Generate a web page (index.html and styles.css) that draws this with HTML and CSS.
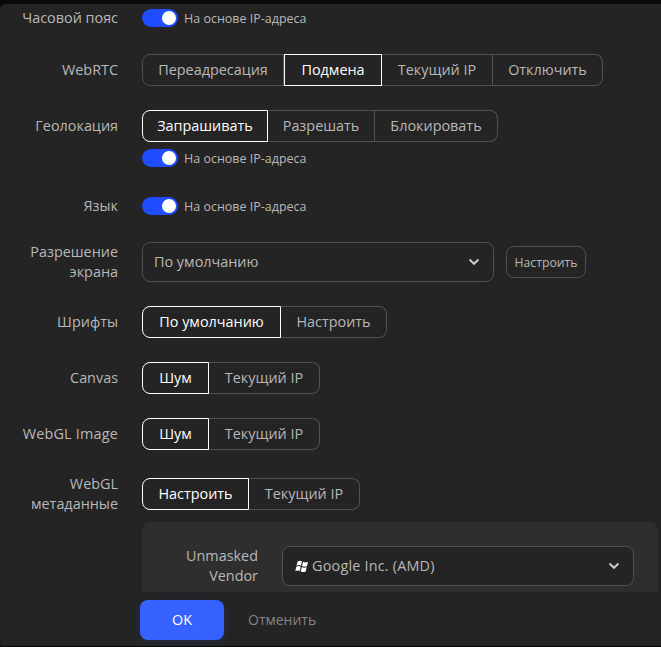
FILE: index.html
```html
<!DOCTYPE html>
<html lang="ru">
<head>
  <meta charset="UTF-8" />
  <meta name="viewport" content="width=device-width, initial-scale=1.0" />
  <title>Настройки профиля</title>
  <link rel="stylesheet" href="styles.css">
</head>
<body>
  <div class="modal">
    <div class="form">
      <div class="row">
        <div class="label">Часовой пояс</div>
        <div class="switch-line"><span class="switch"></span><span class="hint">На основе IP-адреса</span></div>
      </div>

      <div class="row">
        <div class="label">WebRTC</div>
        <div class="group">
          <button class="w142">Переадресация</button>
          <button class="w98 active">Подмена</button>
          <button class="w111">Текущий IP</button>
          <button class="w110">Отключить</button>
        </div>
      </div>

      <div class="row row-top">
        <div class="label label-32">Геолокация</div>
        <div>
          <div class="group">
            <button class="w126 active">Запрашивать</button>
            <button class="w107">Разрешать</button>
            <button class="w123">Блокировать</button>
          </div>
          <div class="switch-line below"><span class="switch"></span><span class="hint">На основе IP-адреса</span></div>
        </div>
      </div>

      <div class="row">
        <div class="label">Язык</div>
        <div class="switch-line"><span class="switch"></span><span class="hint">На основе IP-адреса</span></div>
      </div>

      <div class="row">
        <div class="label">Разрешение<br>экрана</div>
        <div class="line">
          <div class="select">
            <span>По умолчанию</span>
            <svg class="arrow" viewBox="0 0 12 8"><path d="M1.5 1.5 L6 5.8 L10.5 1.5" /></svg>
          </div>
          <button class="small">Настроить</button>
        </div>
      </div>

      <div class="row">
        <div class="label">Шрифты</div>
        <div class="group">
          <button class="w139 active">По умолчанию</button>
          <button class="w106">Настроить</button>
        </div>
      </div>

      <div class="row">
        <div class="label">Canvas</div>
        <div class="group">
          <button class="w67 active">Шум</button>
          <button class="w111">Текущий IP</button>
        </div>
      </div>

      <div class="row">
        <div class="label latin">WebGL Image</div>
        <div class="group">
          <button class="w67 active">Шум</button>
          <button class="w111">Текущий IP</button>
        </div>
      </div>

      <div class="row">
        <div class="label">WebGL<br>метаданные</div>
        <div class="group">
          <button class="w107 active">Настроить</button>
          <button class="w111">Текущий IP</button>
        </div>
      </div>

      <div class="sub">
        <div class="row">
          <div class="label">Unmasked<br>Vendor</div>
          <div class="select">
            <svg class="win" viewBox="0 0 14 13">
              <path d="M2.6 1.4 Q4.8 0 7 1.3 L6 5.7 Q3.8 4.5 1.5 5.8 Z" />
              <path d="M8 1.8 Q10.5 3 13 1.7 L12 6.1 Q9.6 7.3 7 6.1 Z" />
              <path d="M1.3 6.8 Q3.5 5.5 5.7 6.7 L4.7 11 Q2.5 9.8 0.3 11.1 Z" />
              <path d="M6.8 7.1 Q9.2 8.4 11.7 7.1 L10.7 11.5 Q8.2 12.7 5.7 11.5 Z" />
            </svg>
            <span class="latin">Google Inc. (AMD)</span>
            <svg class="arrow" viewBox="0 0 12 8"><path d="M1.5 1.5 L6 5.8 L10.5 1.5" /></svg>
          </div>
        </div>
      </div>
    </div>

    <div class="footer">
      <button class="ok">OK</button>
      <button class="cancel">Отменить</button>
    </div>
  </div>
</body>
</html>
```
FILE: styles.css
```css
* { box-sizing: border-box; }
body {
  margin: 0;
  height: 647px;
  padding: 4px 0 1px;
  background: #0a0a0a;
  color: #b8b8b8;
  font-family: "Open Sans", "Noto Sans", sans-serif;
  font-size: 14.4px;
  line-height: 20px;
  overflow: hidden;
}

button {
  font: inherit;
  color: inherit;
  background: none;
  padding: 0;
  white-space: nowrap;
}

.modal {
  height: 642px;
  background: #242424;
  border-radius: 6px 0 0 3px;
  overflow: hidden;
}

.form {
  height: 588px;
  padding-top: 2px;
  overflow: hidden;
}

.row {
  display: flex;
  align-items: center;
  gap: 24px;
  margin-bottom: 24px;
}

.row-top { align-items: flex-start; }

.label {
  width: 118px;
  flex-shrink: 0;
  text-align: right;
}

.label-32 { line-height: 32px; }

.latin { letter-spacing: 0.2px; }

.line {
  display: flex;
  align-items: center;
  gap: 12px;
}

/* switches */
.switch-line {
  display: flex;
  align-items: center;
  gap: 6px;
  height: 24px;
}

.below { margin-top: 4px; }

.switch {
  width: 36px;
  height: 18px;
  padding: 2px;
  border-radius: 9px;
  background: #1f4dff;
}

.switch::after {
  content: "";
  display: block;
  width: 14px;
  height: 14px;
  margin-left: auto;
  border-radius: 50%;
  background: #fff;
}

.hint {
  font-size: 12.5px;
  padding-top: 2px;
}

/* button groups */
.group { display: flex; }

.group button {
  height: 32px;
  border: 1px solid #505050;
  border-left: none;
}

.group button:first-child {
  border-left: 1px solid #505050;
  border-radius: 8px 0 0 8px;
}

.group button:last-child { border-radius: 0 8px 8px 0; }

.group .active,
.group .active:first-child {
  border: 1px solid #fff;
  color: #fff;
  font-weight: 500;
}

.w67 { width: 67px; }
.w98 { width: 98px; }
.w106 { width: 106px; }
.w107 { width: 107px; }
.w110 { width: 110px; }
.w111 { width: 111px; }
.w123 { width: 123px; }
.w126 { width: 126px; }
.w139 { width: 139px; }
.w142 { width: 142px; }

.select {
  display: flex;
  align-items: center;
  width: 352px;
  height: 40px;
  padding: 0 13px 0 11px;
  border: 1px solid #505050;
  border-radius: 8px;
  background: #242424;
}

.arrow {
  width: 12px;
  height: 8px;
  margin-left: auto;
  fill: none;
  stroke: #c8c8c8;
  stroke-width: 2;
}

.win {
  width: 14px;
  height: 13px;
  margin: 0 3px 0 1px;
  fill: #fff;
}

.small {
  width: 80px;
  height: 32px;
  padding-top: 2px;
  border: 1px solid #505050;
  border-radius: 8px;
  font-size: 12.2px;
}

.sub {
  width: 516px;
  margin: -16px 0 0 142px;
  padding: 24px 0;
  border-radius: 8px;
  background: #2e2e2e;
}

.sub .label { width: 116px; }

.footer {
  display: flex;
  gap: 24px;
  padding: 8px 0 0 140px;
}

.footer button {
  height: 40px;
  border: none;
}

.footer .ok {
  width: 84px;
  border-radius: 8px;
  background: #3662ff;
  color: #fff;
  font-weight: 500;
  box-shadow: 0 2px 8px rgba(54, 98, 255, 0.15);
}

.footer .cancel {
  color: #858585;
  font-size: 14px;
}
```
